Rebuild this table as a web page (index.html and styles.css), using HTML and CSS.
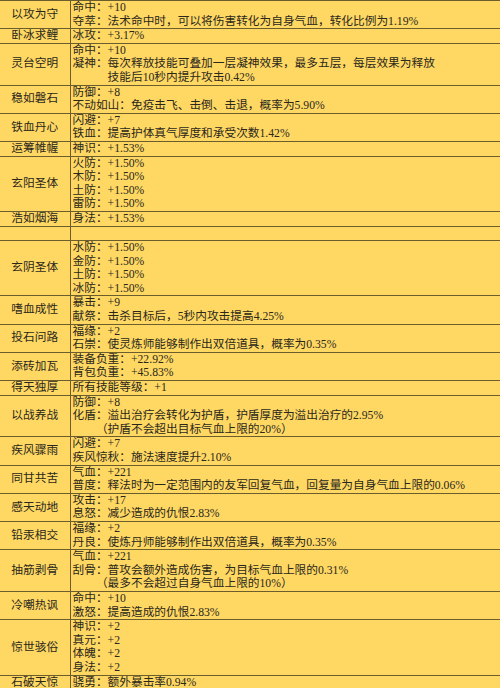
FILE: index.html
```html
<!DOCTYPE html>
<html lang="zh-CN">
<head>
<meta charset="utf-8">
<title>属性表</title>
<link rel="stylesheet" href="styles.css">
</head>
<body>
<table class="sheet">
  <colgroup><col class="c-name"><col class="c-desc"></colgroup>
  <tbody>
    <tr class="first"><td class="name">以攻为守</td><td class="desc"><div class="ln">命中：+10</div><div class="ln">夺萃：法术命中时，可以将伤害转化为自身气血，转化比例为1.19%</div></td></tr>
    <tr><td class="name">卧冰求鲤</td><td class="desc"><div class="ln">冰攻：+3.17%</div></td></tr>
    <tr><td class="name">灵台空明</td><td class="desc"><div class="ln">命中：+10</div><div class="ln">凝神：每次释放技能可叠加一层凝神效果，最多五层，每层效果为释放</div><div class="ln in3">技能后10秒内提升攻击0.42%</div></td></tr>
    <tr><td class="name">稳如磐石</td><td class="desc"><div class="ln">防御：+8</div><div class="ln">不动如山：免疫击飞、击倒、击退，概率为5.90%</div></td></tr>
    <tr><td class="name">铁血丹心</td><td class="desc"><div class="ln">闪避：+7</div><div class="ln">铁血：提高护体真气厚度和承受次数1.42%</div></td></tr>
    <tr><td class="name">运筹帷幄</td><td class="desc"><div class="ln">神识：+1.53%</div></td></tr>
    <tr><td class="name">玄阳圣体</td><td class="desc"><div class="ln">火防：+1.50%</div><div class="ln">木防：+1.50%</div><div class="ln">土防：+1.50%</div><div class="ln">雷防：+1.50%</div></td></tr>
    <tr><td class="name">浩如烟海</td><td class="desc"><div class="ln">身法：+1.53%</div></td></tr>
    <tr><td class="name"></td><td class="desc"><div class="ln"></div></td></tr>
    <tr><td class="name">玄阴圣体</td><td class="desc"><div class="ln">水防：+1.50%</div><div class="ln">金防：+1.50%</div><div class="ln">土防：+1.50%</div><div class="ln">冰防：+1.50%</div></td></tr>
    <tr><td class="name">嗜血成性</td><td class="desc"><div class="ln">暴击：+9</div><div class="ln">献祭：击杀目标后，5秒内攻击提高4.25%</div></td></tr>
    <tr><td class="name">投石问路</td><td class="desc"><div class="ln">福缘：+2</div><div class="ln">石崇：使灵炼师能够制作出双倍道具，概率为0.35%</div></td></tr>
    <tr><td class="name">添砖加瓦</td><td class="desc"><div class="ln">装备负重：+22.92%</div><div class="ln">背包负重：+45.83%</div></td></tr>
    <tr><td class="name">得天独厚</td><td class="desc"><div class="ln">所有技能等级：+1</div></td></tr>
    <tr><td class="name">以战养战</td><td class="desc"><div class="ln">防御：+8</div><div class="ln">化盾：溢出治疗会转化为护盾，护盾厚度为溢出治疗的2.95%</div><div class="ln in2">（护盾不会超出目标气血上限的20%）</div></td></tr>
    <tr><td class="name">疾风骤雨</td><td class="desc"><div class="ln">闪避：+7</div><div class="ln">疾风惊秋：施法速度提升2.10%</div></td></tr>
    <tr><td class="name">同甘共苦</td><td class="desc"><div class="ln">气血：+221</div><div class="ln">普度：释法时为一定范围内的友军回复气血，回复量为自身气血上限的0.06%</div></td></tr>
    <tr><td class="name">感天动地</td><td class="desc"><div class="ln">攻击：+17</div><div class="ln">息怒：减少造成的仇恨2.83%</div></td></tr>
    <tr><td class="name">铅汞相交</td><td class="desc"><div class="ln">福缘：+2</div><div class="ln">丹良：使炼丹师能够制作出双倍道具，概率为0.35%</div></td></tr>
    <tr><td class="name">抽筋剥骨</td><td class="desc"><div class="ln">气血：+221</div><div class="ln">刮骨：普攻会额外造成伤害，为目标气血上限的0.31%</div><div class="ln in2">（最多不会超过自身气血上限的10%）</div></td></tr>
    <tr><td class="name">冷嘲热讽</td><td class="desc"><div class="ln">命中：+10</div><div class="ln">激怒：提高造成的仇恨2.83%</div></td></tr>
    <tr><td class="name">惊世骇俗</td><td class="desc"><div class="ln">神识：+2</div><div class="ln">真元：+2</div><div class="ln">体魄：+2</div><div class="ln">身法：+2</div></td></tr>
    <tr class="last"><td class="name">石破天惊</td><td class="desc"><div class="ln">骁勇：额外暴击率0.94%</div></td></tr>
  </tbody>
</table>
</body>
</html>
```

FILE: styles.css
```css
html, body {
  margin: 0;
  padding: 0;
  background: #ffd864;
  overflow: hidden;
}

body {
  width: 500px;
  height: 688px;
  font-family: "Liberation Serif", "Noto Sans CJK SC", "Noto Sans CJK JP", serif;
  font-size: 11.7px;
  line-height: 13.6px;
  color: #2b271b;
}

.sheet {
  border-collapse: collapse;
  table-layout: fixed;
  width: 500px;
  background: #ffd864;
}

.c-name { width: 70px; }
.c-desc { width: 430px; }

.sheet td {
  padding: 0;
  border-bottom: 1px solid #6e5d2c;
  vertical-align: middle;
}

.sheet tr.first td {
  border-top: 1px solid #6e5d2c;
}

.sheet tr.last td {
  border-bottom: none;
}

.name {
  border-right: 1px solid #6e5d2c;
  text-align: center;
  white-space: nowrap;
}

.sheet td.desc {
  padding-left: 2px;
}

.ln {
  white-space: nowrap;
  height: 13.6px;
}

.in3 { padding-left: 3em; }
.in2 { padding-left: 2em; }
```
